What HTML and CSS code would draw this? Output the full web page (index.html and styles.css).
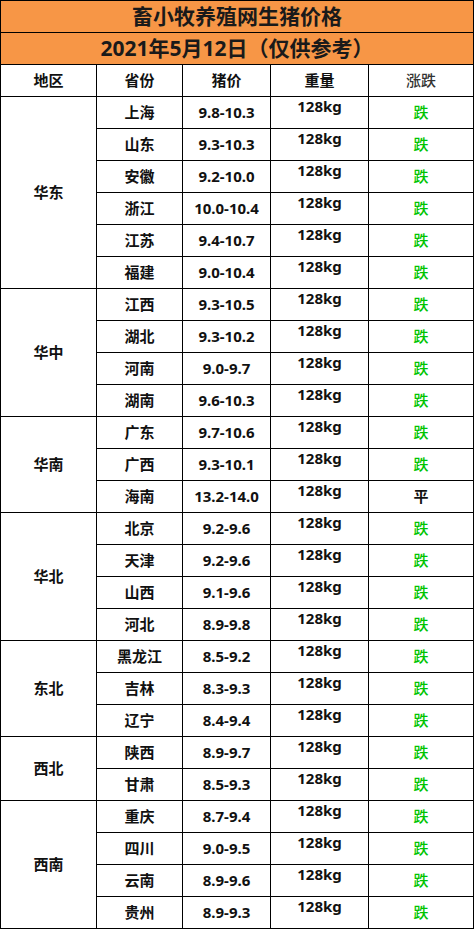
FILE: index.html
```html
<!DOCTYPE html>
<html lang="zh-CN">
<head>
<meta charset="utf-8">
<title>畜小牧养殖网生猪价格</title>
<link rel="stylesheet" href="styles.css">
</head>
<body>
<div class="sheet">
  <div class="banner">畜小牧养殖网生猪价格</div>
  <div class="banner">2021年5月12日（仅供参考）</div>

  <div class="cell head">地区</div>
  <div class="cell head">省份</div>
  <div class="cell head">猪价</div>
  <div class="cell head">重量</div>
  <div class="cell head light">涨跌</div>

  <div class="cell region span6">华东</div>
  <div class="cell">上海</div><div class="cell">9.8-10.3</div><div class="cell kg">128kg</div><div class="cell down">跌</div>
  <div class="cell">山东</div><div class="cell">9.3-10.3</div><div class="cell kg">128kg</div><div class="cell down">跌</div>
  <div class="cell">安徽</div><div class="cell">9.2-10.0</div><div class="cell kg">128kg</div><div class="cell down">跌</div>
  <div class="cell">浙江</div><div class="cell">10.0-10.4</div><div class="cell kg">128kg</div><div class="cell down">跌</div>
  <div class="cell">江苏</div><div class="cell">9.4-10.7</div><div class="cell kg">128kg</div><div class="cell down">跌</div>
  <div class="cell">福建</div><div class="cell">9.0-10.4</div><div class="cell kg">128kg</div><div class="cell down">跌</div>

  <div class="cell region span4">华中</div>
  <div class="cell">江西</div><div class="cell">9.3-10.5</div><div class="cell kg">128kg</div><div class="cell down">跌</div>
  <div class="cell">湖北</div><div class="cell">9.3-10.2</div><div class="cell kg">128kg</div><div class="cell down">跌</div>
  <div class="cell">河南</div><div class="cell">9.0-9.7</div><div class="cell kg">128kg</div><div class="cell down">跌</div>
  <div class="cell">湖南</div><div class="cell">9.6-10.3</div><div class="cell kg">128kg</div><div class="cell down">跌</div>

  <div class="cell region span3">华南</div>
  <div class="cell">广东</div><div class="cell">9.7-10.6</div><div class="cell kg">128kg</div><div class="cell down">跌</div>
  <div class="cell">广西</div><div class="cell">9.3-10.1</div><div class="cell kg">128kg</div><div class="cell down">跌</div>
  <div class="cell">海南</div><div class="cell">13.2-14.0</div><div class="cell kg">128kg</div><div class="cell flat">平</div>

  <div class="cell region span4">华北</div>
  <div class="cell">北京</div><div class="cell">9.2-9.6</div><div class="cell kg">128kg</div><div class="cell down">跌</div>
  <div class="cell">天津</div><div class="cell">9.2-9.6</div><div class="cell kg">128kg</div><div class="cell down">跌</div>
  <div class="cell">山西</div><div class="cell">9.1-9.6</div><div class="cell kg">128kg</div><div class="cell down">跌</div>
  <div class="cell">河北</div><div class="cell">8.9-9.8</div><div class="cell kg">128kg</div><div class="cell down">跌</div>

  <div class="cell region span3">东北</div>
  <div class="cell">黑龙江</div><div class="cell">8.5-9.2</div><div class="cell kg">128kg</div><div class="cell down">跌</div>
  <div class="cell">吉林</div><div class="cell">8.3-9.3</div><div class="cell kg">128kg</div><div class="cell down">跌</div>
  <div class="cell">辽宁</div><div class="cell">8.4-9.4</div><div class="cell kg">128kg</div><div class="cell down">跌</div>

  <div class="cell region span2">西北</div>
  <div class="cell">陕西</div><div class="cell">8.9-9.7</div><div class="cell kg">128kg</div><div class="cell down">跌</div>
  <div class="cell">甘肃</div><div class="cell">8.5-9.3</div><div class="cell kg">128kg</div><div class="cell down">跌</div>

  <div class="cell region span4">西南</div>
  <div class="cell">重庆</div><div class="cell">8.7-9.4</div><div class="cell kg">128kg</div><div class="cell down">跌</div>
  <div class="cell">四川</div><div class="cell">9.0-9.5</div><div class="cell kg">128kg</div><div class="cell down">跌</div>
  <div class="cell">云南</div><div class="cell">8.9-9.6</div><div class="cell kg">128kg</div><div class="cell down">跌</div>
  <div class="cell">贵州</div><div class="cell">8.9-9.3</div><div class="cell kg">128kg</div><div class="cell down">跌</div>
</div>
</body>
</html>
```
FILE: styles.css
```css
html, body {
  margin: 0;
  padding: 0;
  background: #ffffff;
}

.sheet {
  width: 473px;
  display: grid;
  grid-template-columns: 96px 86px 88px 98px 105px;
  grid-auto-rows: 32px;
  border-left: 1px solid #000;
  border-top: 1px solid #000;
  font-family: "Noto Sans", "Noto Sans CJK SC", sans-serif;
  font-weight: bold;
  font-size: 15px;
  color: #111;
}

.banner {
  grid-column: 1 / -1;
  background: #f79646;
  border-right: 1px solid #000;
  border-bottom: 1px solid #000;
  display: flex;
  align-items: center;
  justify-content: center;
  font-size: 21px;
  color: #1a1a1a;
  line-height: 1;
}

.cell {
  border-right: 1px solid #000;
  border-bottom: 1px solid #000;
  display: flex;
  align-items: center;
  justify-content: center;
  line-height: 1;
  white-space: nowrap;
}

.head.light {
  font-weight: 500;
  color: #333333;
}

.region {
  grid-column: 1;
}
.span2 { grid-row: span 2; }
.span3 { grid-row: span 3; }
.span4 { grid-row: span 4; }
.span6 { grid-row: span 6; }

.kg {
  align-items: flex-start;
  line-height: 18px;
}

.down {
  color: #00c400;
  font-weight: 500;
}

.flat {
  color: #111;
}
```
